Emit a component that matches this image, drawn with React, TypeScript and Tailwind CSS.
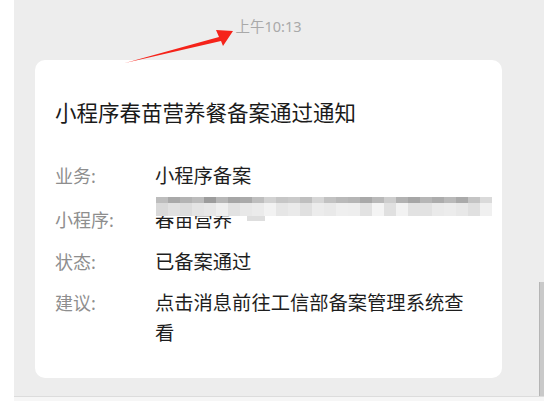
import React from "react";

const topRow = [
  "bg-[#bdbdbd]", "bg-[#a9a9a9]", "bg-[#b3b3b3]", "bg-[#bcbcbc]", "bg-[#9c9c9c]", "bg-[#b7b7b7]",
  "bg-[#a6a6a6]", "bg-[#aaaaaa]", "bg-[#bebebe]", "bg-[#d2d2d2]", "bg-[#c6c6c6]", "bg-[#cacaca]",
  "bg-[#bfbfbf]", "bg-[#d6d6d6]", "bg-[#c2c2c2]", "bg-[#b9b9b9]", "bg-[#b5b5b5]", "bg-[#a9a9a9]",
  "bg-[#b9b9b9]", "bg-[#cdcdcd]", "bg-[#b2b2b2]", "bg-[#a6a6a6]", "bg-[#b6b6b6]", "bg-[#acacac]",
  "bg-[#b9b9b9]", "bg-[#aaaaaa]", "bg-[#c4c4c4]", "bg-[#dadada]",
];

const bottomRow = [
  "bg-[#d9d9d9]", "bg-[#e1e1e1]", "bg-[#dcdcdc]", "bg-[#e4e4e4]", "bg-[#e7e7e7]", "bg-[#efefef]",
  "bg-[#e2e2e2]", "bg-[#e8e8e8]", "bg-[#ebebeb]", "bg-[#f2f2f2]", "bg-[#e6e6e6]", "bg-[#eaeaea]",
  "bg-[#e0e0e0]", "bg-[#ececec]", "bg-[#e9e9e9]", "bg-[#efefef]", "bg-[#eeeeee]", "bg-[#e2e2e2]",
  "bg-[#f4f4f4]", "bg-[#e0e0e0]", "bg-[#f2f2f2]", "bg-[#e2e2e2]", "bg-[#e2e2e2]", "bg-[#eaeaea]",
  "bg-[#ececec]", "bg-[#e8e8e8]", "bg-[#e0e0e0]", "bg-[#f0f0f0]",
];

const font = { fontFamily: '"Noto Sans", "Noto Sans CJK SC", sans-serif' };

function Row({ label, children, className = "" }: { label: string; children: React.ReactNode; className?: string }) {
  return (
    <div className={"flex leading-[30px] " + className}>
      <div className="w-[100px] shrink-0 text-[18px] text-[#8e8e8e]">{label}</div>
      <div className="flex-1 text-[19.3px] text-[#1e1e1e]">{children}</div>
    </div>
  );
}

export default function App() {
  return (
    <div className="relative flex h-[401px] w-[544px] overflow-hidden bg-white" style={font}>
      <div className="w-[14px] shrink-0 bg-white" />
      <div className="flex flex-1 flex-col">
        <div className="flex h-[396px] flex-col bg-[#ededed]">
          {/* time */}
          <div className="ml-[21px] h-[60px] w-[467px] pt-[16px] text-center text-[14.5px] leading-[20px] text-[#a9a9a9]">
            上午10:13
          </div>

          {/* card */}
          <div className="ml-[21px] h-[318px] w-[467px] rounded-[10px] bg-white pl-[20px] pr-[30px] pt-[38px]">
            <div className="text-[21.5px] leading-[30px] text-[#1a1a1a]">小程序春苗营养餐备案通过通知</div>

            <Row label="业务:" className="mt-[33px]">小程序备案</Row>
            <Row label="小程序:" className="mt-[14px]">
              <span className="relative block h-[30px]">
                <span>春苗营养</span>
                <span className="absolute left-[1px] top-[-8px] flex flex-col">
                  <span className="flex">
                    {topRow.map((c, i) => (
                      <span key={i} className={"h-[6px] w-[12px] " + c} />
                    ))}
                  </span>
                  <span className="flex">
                    {bottomRow.map((c, i) => (
                      <span key={i} className={"h-[13px] w-[12px] " + c} />
                    ))}
                  </span>
                </span>
                <span className="absolute left-[88px] top-[11px] h-[19px] w-[250px] bg-white" />
                <span className="absolute left-[92px] top-[11px] h-[5px] w-[18px] bg-[#dedede]" />
              </span>
            </Row>
            <Row label="状态:" className="mt-[12px]">已备案通过</Row>
            <Row label="建议:" className="mt-[11px]">点击消息前往工信部备案管理系统查看</Row>
          </div>
        </div>
        <div className="h-px bg-[#dcdcdc]" />
        <div className="flex-1 bg-[#f6f6f6]" />
      </div>

      {/* scrollbar */}
      <div className="absolute left-[539px] top-[282px] h-[114px] w-[5px] border-l border-[#b5b5b5] bg-[#c9c9c9]" />

      {/* red arrow annotation */}
      <svg className="pointer-events-none absolute left-0 top-0" width="544" height="401" viewBox="0 0 544 401">
        <polygon points="125,63 219,37 216,30 233,31 223,46 221,41" fill="#f5231a" />
      </svg>
    </div>
  );
}
